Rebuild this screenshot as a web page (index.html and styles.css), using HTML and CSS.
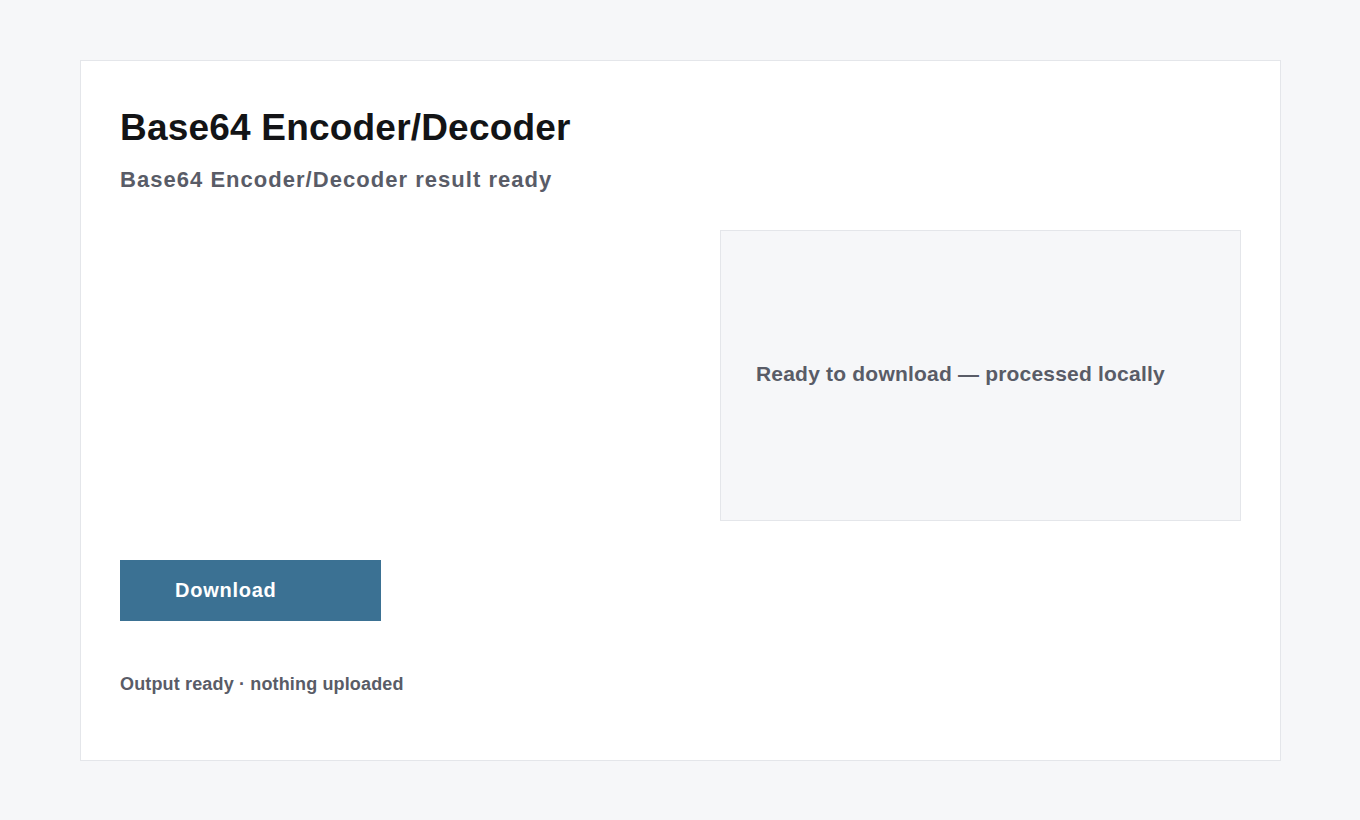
FILE: index.html
```html
<!DOCTYPE html>
<html lang="en">
<head>
    <meta charset="UTF-8">
    <meta name="viewport" content="width=device-width, initial-scale=1.0">
    <title>Base64 Encoder/Decoder</title>
    <link rel="stylesheet" href="styles.css">
</head>
<body>
    <div class="page">
        <div class="card">
            <h1 class="title">Base64 Encoder/Decoder</h1>
            <p class="subtitle">Base64 Encoder/Decoder result ready</p>
            <div class="work">
                <div class="work_left"></div>
                <div class="result_box">
                    <p>Ready to download — processed locally</p>
                </div>
            </div>
            <button class="download_btn">Download</button>
            <p class="status">Output ready · nothing uploaded</p>
        </div>
    </div>
</body>
</html>
```

FILE: styles.css
```css
body{
  margin: 0;
  background-color: #f6f7f9;
  font-family: "Liberation Sans", Arial, sans-serif;
}
.page{
  padding: 60px 80px;
}
.card{
  width: 1201px;
  height: 701px;
  box-sizing: border-box;
  background-color: #fff;
  border: 1px solid #e4e6ea;
  padding: 45px 39px 23px;
}
.title{
  margin: 0;
  font-size: 37px;
  line-height: 1.2;
  letter-spacing: 0.2px;
  font-weight: bold;
  color: #131416;
}
.subtitle{
  margin: 16px 0 0;
  font-size: 22px;
  line-height: 1.3;
  letter-spacing: 1.03px;
  font-weight: bold;
  color: #595c67;
}
.work{
  margin-top: 35px;
  display: grid;
  grid-template-columns: 1fr 521px;
  gap: 80px;
}
.result_box{
  height: 291px;
  box-sizing: border-box;
  background-color: #f6f7f9;
  border: 1px solid #e4e6ea;
  padding: 0 35px;
  display: flex;
  align-items: center;
}
.result_box p{
  margin: 0 0 2px;
  font-size: 21px;
  letter-spacing: 0.2px;
  font-weight: bold;
  color: #595c67;
}
.download_btn{
  display: block;
  margin-top: 39px;
  width: 261px;
  height: 61px;
  border: none;
  background-color: #3b7193;
  color: #fff;
  font-family: inherit;
  font-size: 20px;
  letter-spacing: 0.75px;
  font-weight: bold;
  text-align: left;
  padding: 0 0 0 55px;
}
.status{
  margin: 51px 0 0;
  font-size: 18px;
  line-height: 1.4;
  letter-spacing: 0.15px;
  font-weight: bold;
  color: #595c67;
}
```
